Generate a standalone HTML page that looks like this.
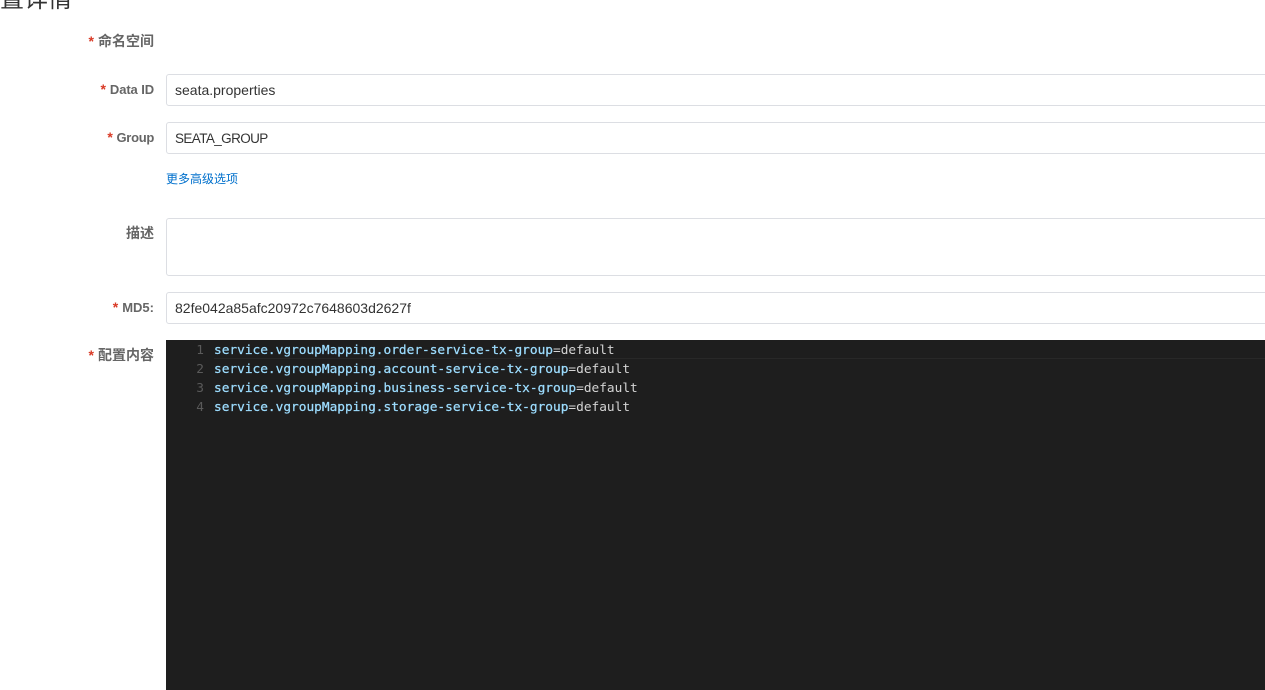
<!DOCTYPE html>
<html lang="zh">
<head>
<meta charset="utf-8">
<style>
html,body{margin:0;padding:0;background:#fff;width:1265px;height:690px;overflow:hidden}
body{position:relative;font-family:"Liberation Sans","Noto Sans CJK SC",sans-serif;color:#333}
.abs{position:absolute;white-space:nowrap}
.title{left:-24px;top:-16px;font-size:24px;line-height:32px;color:#333}
.lab{right:1111px;font-size:14px;font-weight:bold;line-height:16px;color:#666}
.lab.en{font-size:13px}
.lab i{font-style:normal;color:#d93a26;margin-right:4px;font-weight:bold;font-size:14px}
.inp{position:absolute;left:166px;width:1110px;box-sizing:border-box;border:1px solid #dcdee3;border-radius:3px;background:#fff;font-size:14px;line-height:30px;padding-left:8px;color:#333}
.link{left:166px;top:171px;font-size:12px;line-height:16px;color:#0070cc}
.ed{position:absolute;left:166px;top:340px;width:1099px;height:350px;background:#1e1e1e;font-family:"DejaVu Sans Mono","Liberation Mono",monospace;font-size:12.8px}
.cur{position:absolute;left:48px;top:1px;right:0;height:18px;border-bottom:1px solid #282828;box-sizing:border-box}
.ln{position:absolute;width:38px;left:0;text-align:right;color:#5a5a5a;line-height:19px}
.code{position:absolute;left:48px;line-height:19px;color:#9cdcfe;white-space:pre;-webkit-text-stroke:0.25px #9cdcfe}
.code span{color:#d4d4d4;-webkit-text-stroke:0}
</style>
</head>
<body>
<div class="abs title">配置详情</div>

<div class="abs lab" style="top:33px"><i>*</i>命名空间</div>
<div class="abs lab en" style="top:81px;letter-spacing:-0.1px"><i>*</i>Data ID</div>
<div class="inp" style="top:74px;height:32px">seata.properties</div>
<div class="abs lab en" style="top:129px;letter-spacing:-0.3px"><i>*</i>Group</div>
<div class="inp" style="top:122px;height:32px"><span style="font-size:13.5px;letter-spacing:-0.6px">SEATA_GROUP</span></div>
<div class="abs link">更多高级选项</div>
<div class="abs lab" style="top:225px">描述</div>
<div class="inp" style="top:218px;height:58px"></div>
<div class="abs lab en" style="top:299px"><i>*</i>MD5:</div>
<div class="inp" style="top:292px;height:32px">82fe042a85afc20972c7648603d2627f</div>
<div class="abs lab" style="top:347px"><i>*</i>配置内容</div>

<div class="ed">
<div class="cur"></div>
<div class="ln" style="top:1px">1</div>
<div class="ln" style="top:20px">2</div>
<div class="ln" style="top:39px">3</div>
<div class="ln" style="top:58px">4</div>
<div class="code" style="top:1px">service.vgroupMapping.order-service-tx-group<span>=default</span></div>
<div class="code" style="top:20px">service.vgroupMapping.account-service-tx-group<span>=default</span></div>
<div class="code" style="top:39px">service.vgroupMapping.business-service-tx-group<span>=default</span></div>
<div class="code" style="top:58px">service.vgroupMapping.storage-service-tx-group<span>=default</span></div>
</div>
</body>
</html>
